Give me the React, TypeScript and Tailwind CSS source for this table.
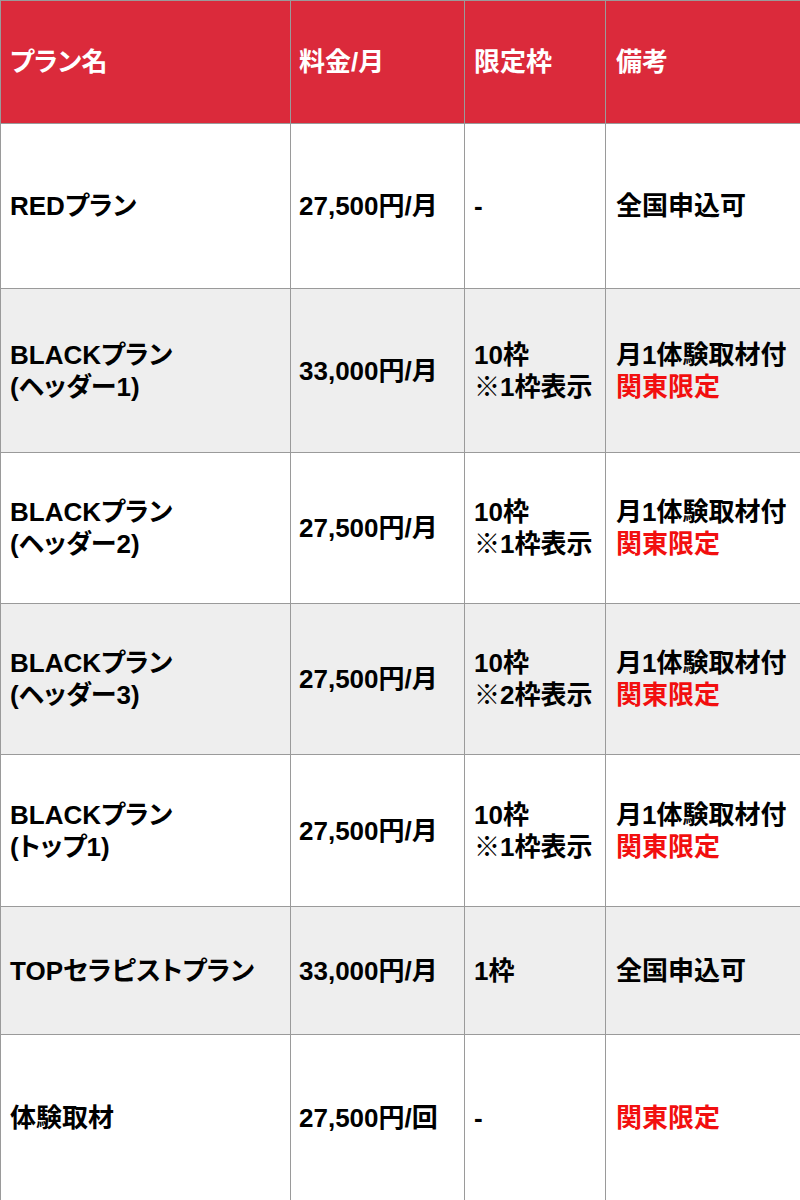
import React from "react"

type Row = {
  name: string[]
  price: string
  limit: string[]
  note: { text: string; red?: boolean }[]
  height: string
  alt?: boolean
}

const rows: Row[] = [
  { name: ["REDプラン"], price: "27,500円/月", limit: ["-"], note: [{ text: "全国申込可" }], height: "h-[165px]" },
  {
    name: ["BLACKプラン", "(ヘッダー1)"],
    price: "33,000円/月",
    limit: ["10枠", "※1枠表示"],
    note: [{ text: "月1体験取材付" }, { text: "関東限定", red: true }],
    height: "h-[164px]",
    alt: true,
  },
  {
    name: ["BLACKプラン", "(ヘッダー2)"],
    price: "27,500円/月",
    limit: ["10枠", "※1枠表示"],
    note: [{ text: "月1体験取材付" }, { text: "関東限定", red: true }],
    height: "h-[151px]",
  },
  {
    name: ["BLACKプラン", "(ヘッダー3)"],
    price: "27,500円/月",
    limit: ["10枠", "※2枠表示"],
    note: [{ text: "月1体験取材付" }, { text: "関東限定", red: true }],
    height: "h-[151px]",
    alt: true,
  },
  {
    name: ["BLACKプラン", "(トップ1)"],
    price: "27,500円/月",
    limit: ["10枠", "※1枠表示"],
    note: [{ text: "月1体験取材付" }, { text: "関東限定", red: true }],
    height: "h-[152px]",
  },
  {
    name: ["TOPセラピストプラン"],
    price: "33,000円/月",
    limit: ["1枠"],
    note: [{ text: "全国申込可" }],
    height: "h-[128px]",
    alt: true,
  },
  {
    name: ["体験取材"],
    price: "27,500円/回",
    limit: ["-"],
    note: [{ text: "関東限定", red: true }],
    height: "h-[166px]",
  },
]

const cell = "border border-[#9a9a9a] pl-[9px] pr-0 align-middle"

export default function App() {
  return (
    <div
      className="w-[800px] h-[1200px] bg-white text-black font-bold text-[26px] leading-[32px]"
      style={{ fontFamily: '"Liberation Sans", "Noto Sans CJK JP", sans-serif', fontFeatureSettings: '"palt"' }}
    >
      <table className="w-[800px] table-fixed border-collapse">
        <colgroup>
          <col className="w-[290px]" />
          <col className="w-[174px]" />
          <col className="w-[141px]" />
          <col className="w-[195px]" />
        </colgroup>
        <thead>
          <tr className="h-[123px] bg-[#db2a3b] text-white">
            <th className={`${cell} text-left font-bold`}>プラン名</th>
            <th className={`${cell} !pl-[8px] text-left font-bold`}>料金/月</th>
            <th className={`${cell} text-left font-bold`}>限定枠</th>
            <th className={`${cell} !pl-[10px] text-left font-bold`}>備考</th>
          </tr>
        </thead>
        <tbody>
          {rows.map((r, i) => (
            <tr key={i} className={`${r.height} ${r.alt ? "bg-[#eeeeee]" : "bg-white"}`}>
              <td className={cell}>
                {r.name.map((n, j) => (
                  <div key={j} className="whitespace-nowrap">{n}</div>
                ))}
              </td>
              <td className={`${cell} !pl-[8px] whitespace-nowrap`}>{r.price}</td>
              <td className={cell}>
                {r.limit.map((n, j) => (
                  <div key={j} className="whitespace-nowrap">{n}</div>
                ))}
              </td>
              <td className={`${cell} !pl-[10px]`}>
                {r.note.map((n, j) => (
                  <div key={j} className={`whitespace-nowrap ${n.red ? "text-[#f20f0f]" : ""}`}>
                    {n.text}
                  </div>
                ))}
              </td>
            </tr>
          ))}
        </tbody>
      </table>
    </div>
  )
}
